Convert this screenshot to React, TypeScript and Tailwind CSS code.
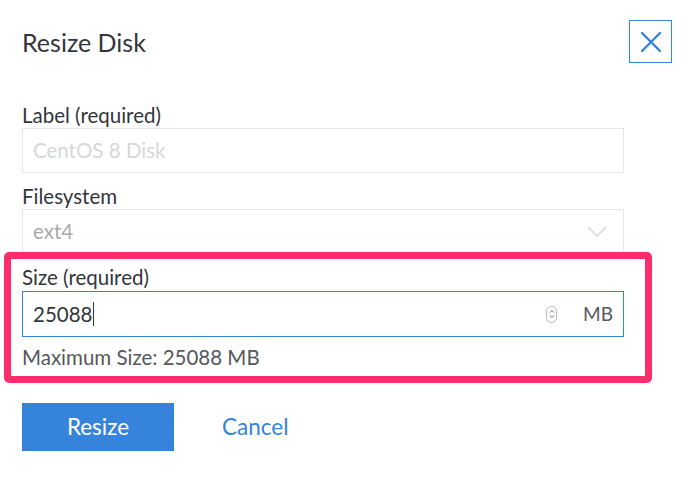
import React from 'react';

const font = { fontFamily: 'Lato, "Open Sans", sans-serif' };

export default function App() {
    return (
        <div className="w-[694px] h-[491px] bg-white text-[#32363c] overflow-hidden" style={font}>
            <div className="pl-[22px] pr-[22px] pt-[20px]">
                <div className="flex items-start justify-between">
                    <h2 className="text-[25px] leading-[30px] mt-[7px] font-normal">Resize Disk</h2>
                    <button className="w-[43px] h-[43px] border border-[#3683dc] flex items-center justify-center text-[#3683dc]">
                        <svg width="22" height="22" viewBox="0 0 22 22" fill="none" stroke="currentColor" strokeWidth="2.4" strokeLinecap="round">
                            <path d="M2 2 L20 20 M20 2 L2 20" />
                        </svg>
                    </button>
                </div>

                <div className="w-[602px] mt-[40px]">
                    <label className="block text-[20.5px] leading-[24px]">Label (required)</label>
                    <div className="mt-[1px] h-[45px] border border-[#e6e6e6] flex items-center px-[10px] text-[20.5px] text-[#d6d7d9]">
                        CentOS 8 Disk
                    </div>

                    <label className="block text-[20.5px] leading-[24px] mt-[11px]">Filesystem</label>
                    <div className="mt-[1px] h-[45px] border border-[#e6e6e6] flex items-center justify-between pl-[10px] pr-[16px] text-[20.5px] text-[#a8a9ab]">
                        <span>ext4</span>
                        <svg width="20" height="12" viewBox="0 0 20 12" fill="none" stroke="#d6d7d9" strokeWidth="1.5">
                            <path d="M1 1 L10 10 L19 1" />
                        </svg>
                    </div>
                </div>
            </div>

            <div className="relative ml-[4px] mt-[-2px] w-[648px] h-[131px] border-[7px] border-[#ff2d6c] rounded-[5px] pl-[11px] pt-[6px] bg-white">
                <label className="block text-[20.5px] leading-[24px]">Size (required)</label>
                <div className="mt-[2px] w-[602px] h-[46px] border border-[#3683dc] flex items-center pl-[10px] pr-[10px] text-[20.5px]">
                    <span>25088</span>
                    <span className="ml-[1px] w-px h-[24px] bg-[#32363c]" />
                    <span className="flex-1" />
                    <span className="w-[11px] h-[17px] border border-[#b9babc] rounded-full flex items-center justify-center mr-[26px]">
                        <svg width="6" height="12" viewBox="0 0 6 12" fill="none" stroke="#6b6d70" strokeWidth="1">
                            <path d="M1 4.5 L3 2.5 L5 4.5 M1 7.5 L3 9.5 L5 7.5" />
                        </svg>
                    </span>
                    <span className="text-[#55585c] text-[19px]">MB</span>
                </div>
                <p className="mt-[8px] text-[20.5px] leading-[24px] text-[#55585c]">Maximum Size: 25088 MB</p>
            </div>

            <div className="pl-[22px] mt-[20px] flex items-center">
                <button className="w-[152px] h-[48px] bg-[#3683dc] text-white text-[22.5px]">Resize</button>
                <button className="ml-[48px] text-[#3683dc] text-[22.5px]">Cancel</button>
            </div>
        </div>
    );
}
